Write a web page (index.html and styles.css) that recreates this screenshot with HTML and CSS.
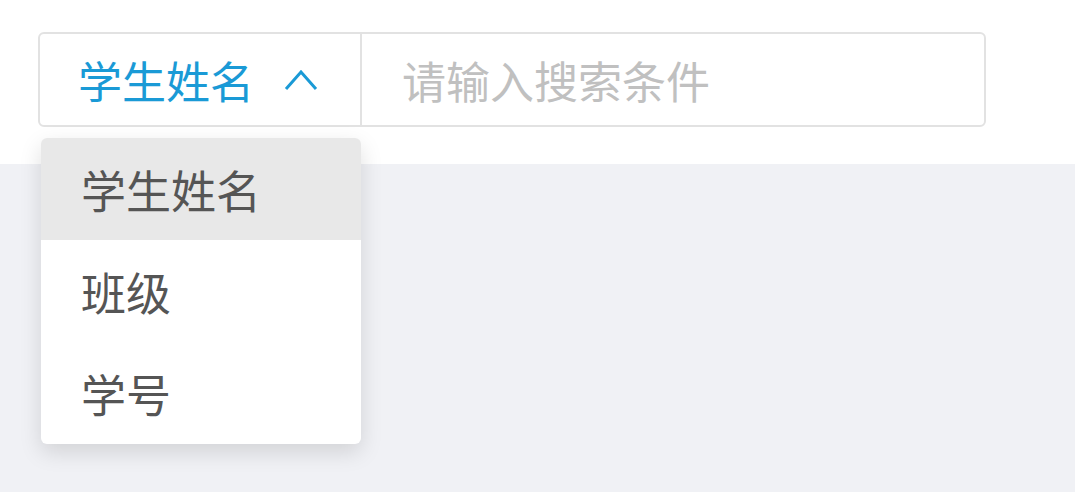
FILE: index.html
```html
<!DOCTYPE html>
<html lang="zh">
<head>
<meta charset="utf-8">
<link rel="stylesheet" href="styles.css">
</head>
<body>
<div class="top">
  <div class="search">
    <div class="select">
      <span class="select-label">学生姓名</span>
      <svg class="chev" width="34" height="24" viewBox="0 0 34 24"><path d="M2 22 L17 5 L32 22" fill="none" stroke="#1a9ad6" stroke-width="3"/></svg>
    </div>
    <div class="input">请输入搜索条件</div>
  </div>
  <ul class="menu">
    <li class="item active">学生姓名</li>
    <li class="item">班级</li>
    <li class="item">学号</li>
  </ul>
</div>
<div class="content"></div>
</body>
</html>
```
FILE: styles.css
```css
html, body { margin: 0; height: 100%; }
body {
  font-family: "Noto Sans CJK SC", "Noto Sans", sans-serif;
  background: #f0f1f5;
}
.top {
  position: relative;
  background: #fff;
  height: 164px;
  box-sizing: border-box;
  padding: 32px 0 0 38px;
}
.search {
  display: flex;
  width: 948px;
  height: 95px;
  box-sizing: border-box;
  border: 2px solid #e2e2e2;
  border-radius: 6px;
  background: #fff;
}
.select {
  width: 322px;
  box-sizing: border-box;
  border-right: 2px solid #e2e2e2;
  display: flex;
  align-items: center;
  padding-left: 38px;
  gap: 30px;
}
.select-label {
  font-size: 44px;
  color: #1a9ad6;
  line-height: 1;
}
.chev { display: block; margin-top: -2px; }
.input {
  flex: 1;
  display: flex;
  align-items: center;
  padding-left: 40px;
  font-size: 44px;
  color: #c0c0c0;
}
.menu {
  position: absolute;
  left: 41px;
  top: 138px;
  width: 320px;
  margin: 0;
  padding: 0;
  list-style: none;
  background: #fff;
  border-radius: 6px;
  overflow: hidden;
  box-shadow: 0 8px 22px rgba(0,0,0,0.13);
}
.item {
  height: 102px;
  display: flex;
  align-items: center;
  padding-left: 40px;
  font-size: 45px;
  color: #555;
}
.item.active { background: #e8e8e8; }
```
